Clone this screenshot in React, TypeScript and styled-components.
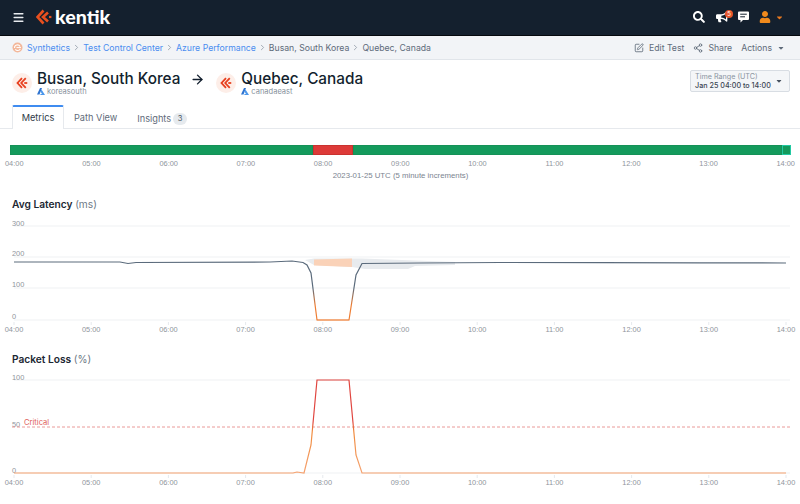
import React from "react";
import styled, { createGlobalStyle } from "styled-components";
import { FaSearch, FaBullhorn, FaUser, FaCaretDown } from "react-icons/fa";
import { SquarePen, Share2, ChevronRight, ArrowRight, Menu } from "lucide-react";

const Global = createGlobalStyle`
  html, body { margin: 0; padding: 0; background: #fff; }
  body { font-family: Inter, "Liberation Sans", sans-serif; color: #1c2733; width: 800px; height: 504px; overflow: hidden; }
  * { box-sizing: border-box; }
`;

const TopBar = styled.header`
  height: 36px; background: #14202e; border-bottom: 1px solid #05090e;
  display: flex; align-items: center; padding: 0 16px 1px 12px; color: #fff;
`;
const Logo = styled.div`display: flex; align-items: center; margin-left: 11px; gap: 3px; flex: 1;`;
const LogoText = styled.span`font-family: Lato, sans-serif; font-weight: 900; font-size: 19.6px; line-height: 24px; color: #fff;`;
const NavIcons = styled.div`display: flex; align-items: center;`;
const NavIcon = styled.span<{ $w: number }>`position: relative; display: flex; align-items: center; justify-content: flex-start; width: ${p => p.$w}px; color: #fff;`;
const Badge = styled.span`
  position: absolute; top: -1px; left: 9px; width: 8px; height: 8px; border-radius: 50%;
  background: #e8562a; color: #fff; font-size: 6px; line-height: 8px; text-align: center;
`;
const UserCaret = styled.span`display: flex; color: #e8791f; margin-left: 0;`;

const Crumbs = styled.nav`
  height: 24px; background: #f2f4f7; border-bottom: 1px solid #e1e5ea;
  display: flex; align-items: center; padding: 0 15px 0 12px; font-size: 8.7px; color: #5f6b7a;
`;
const CrumbTrail = styled.div`display: flex; align-items: center; flex: 1;`;
const CrumbLink = styled.a`color: #4a8df0;`;
const CrumbText = styled.span`color: #5f6b7a;`;
const CrumbSep = styled.span`display: flex; color: #8a94a0; margin: 0 2px 0 2px;`;
const SynthIcon = styled.span`display: flex; margin-right: 4px;`;
const CrumbAction = styled.span`display: flex; align-items: center; gap: 5px; margin-left: 9px; color: #5f6b7a; font-size: 8.7px;`;

const Header = styled.section`display: flex; justify-content: space-between; padding: 10px 10px 0 12px; height: 45px;`;
const Route = styled.div`display: flex; align-items: flex-start;`;
const Endpoint = styled.div`display: flex; align-items: flex-start; gap: 5px;`;
const Avatar = styled.span`
  width: 20px; height: 20px; border-radius: 50%; background: #fdeee8; margin-top: 3px;
  display: flex; align-items: center; justify-content: center;
`;
const EndpointText = styled.div`display: flex; flex-direction: column;`;
const EndpointName = styled.div`font-size: 15.3px; font-weight: 500; line-height: 17px; color: #131f2e;`;
const Region = styled.div`display: flex; align-items: center; gap: 2px; font-size: 7.5px; line-height: 9px; color: #87919c;`;
const RouteArrow = styled.span`display: flex; color: #131f2e; margin: 2px 11px 0 10px;`;
const RangeBox = styled.div`
  width: 100px; height: 22px; background: #f4f6f8; border: 1px solid #d8dde3; border-radius: 2px;
  padding: 1px 5px 0 4px; position: relative;
`;
const RangeLabel = styled.div`font-size: 7.2px; line-height: 9px; color: #8a94a0;`;
const RangeValue = styled.div`font-size: 7.2px; line-height: 10px; color: #3a4552; font-weight: 500; white-space: nowrap;`;
const RangeCaret = styled.span`position: absolute; right: 6px; top: 6px; display: flex; color: #47525f;`;

const Tabs = styled.div`display: flex; height: 24px; padding-left: 12px; border-bottom: 1px solid #e6e9ed; align-items: stretch;`;
const Tab = styled.div<{ $active?: boolean; $drop?: number }>`
  display: flex; align-items: center; gap: 2px; font-size: 9.2px; padding: ${p => p.$drop ?? 2}px 10px 0;
  color: ${p => (p.$active ? "#303b48" : "#5f6b7a")};
  ${p => p.$active ? "background:#fff;border:1px solid #e6e9ed;border-top:2px solid #3f8cf0;border-bottom:0;height:24px;width:52px;justify-content:center;padding:0 0 2px;border-radius:2px 2px 0 0;" : ""}
`;
const Count = styled.span`
  min-width: 14px; height: 12px; border-radius: 6px; background: #e6eaee; font-size: 7.6px; line-height: 12px; text-align: center; color: #4f5a66;
`;

const Status = styled.section`padding: 16px 9px 0 10px;`;
const StatusBar = styled.div`display: flex; height: 10px; background: #149a5c;`;
const Segment = styled.div<{ $grow: number; $kind: "ok" | "bad" | "edge" }>`
  flex: ${p => p.$grow} 0 0;
  background: ${p => (p.$kind === "bad" ? "#dd3a38" : "#149a5c")};
  border: 1px solid ${p => (p.$kind === "bad" ? "#c9322f" : p.$kind === "edge" ? "#22c9a2" : "#159157")};
`;
const TimeAxis = styled.div`
  display: flex; justify-content: space-between; margin: 5px -4px 0 -5px; font-family: "Liberation Sans", sans-serif;
  font-size: 7.4px; line-height: 8px; color: #8f959c;
`;
const Caption = styled.div`text-align: center; font-family: "Liberation Sans", sans-serif; font-size: 7.8px; line-height: 9px; color: #7b8490; margin-top: 3px;`;

const ChartBlock = styled.section<{ $top: number }>`margin-top: ${p => p.$top}px;`;
const ChartTitle = styled.h3`margin: 0; padding-left: 12px; font-size: 10.2px; line-height: 13px; font-weight: 600; color: #1c2733;`;
const Unit = styled.span`font-weight: 400; color: #6e7986;`;
const ChartSvg = styled.svg`display: block; width: 800px; margin-top: 4px;`;
const AxisText = styled.text`font-family: "Liberation Sans", sans-serif; font-size: 7.4px; fill: #8f959c;`;
const CriticalText = styled.text`font-family: Inter, sans-serif; font-size: 7.6px; fill: #e0605c;`;

const hours = ["04:00","05:00","06:00","07:00","08:00","09:00","10:00","11:00","12:00","13:00","14:00"];
const xAt = (i: number) => 14 + i * 77.2;

const KentikMark = ({ size = 16 }: { size?: number }) => (
  <svg width={size} height={size} viewBox="0 0 16 16" fill="none" stroke="#e8501f" strokeWidth="2.6">
    <path d="M7.5 1.5 L1.5 8 L7.5 14.5" />
    <path d="M12 3.5 L7 8 L12 12.5" />
    <path d="M13 8 h2.4" strokeWidth="2.2" />
  </svg>
);
const AvatarMark = () => (
  <svg width="12" height="12" viewBox="0 0 16 16" fill="none" stroke="#e8401f" strokeWidth="2.4">
    <path d="M8 1.5 L2 8 L8 14.5" />
    <path d="M13 1.5 L7 8 L13 14.5" />
    <path d="M11 8 h4" />
  </svg>
);
const Azure = () => (
  <svg width="8" height="7" viewBox="0 0 16 14"><path d="M6 0 h4 L5 13 H0 Z" fill="#2f74d0" /><path d="M9 3 L16 14 H5 L10 11 L7 8 Z" fill="#4c98ec" /></svg>
);
const Synth = () => (
  <svg width="11" height="11" viewBox="0 0 11 11">
    <circle cx="5.5" cy="5.5" r="5" fill="#f3b79a" />
    <path d="M2.5 6 a3 3 0 0 1 5.6 -1.6 M3.3 7.4 a3 3 0 0 0 5 -.4" stroke="#fff" strokeWidth="1.1" fill="none" />
    <path d="M4.5 5.6 H9" stroke="#fff" strokeWidth="1" />
  </svg>
);
const ChatBubble = () => (
  <svg width="11" height="12" viewBox="0 0 11 12">
    <path d="M1 0.5 H10 a1 1 0 0 1 1 1 V8 a1 1 0 0 1 -1 1 H5 L2.5 11.5 V9 H1 a1 1 0 0 1 -1 -1 V1.5 a1 1 0 0 1 1 -1 Z" fill="#fff" />
    <path d="M2.2 3.2 H8.8 M2.2 5.8 H7" stroke="#14202e" strokeWidth="1" />
  </svg>
);

const latencyLine = "14,262 120,262 128,263.5 136,262.5 270,262 292,261 303,262.5 307,265 311,273 317,320 349,320 356,275 362,263.5 420,263 500,262.5 600,262.6 700,262.8 786,263";
const lossLine = "14,473 293,473 297,472 304,473 311,445 317,380 349,380 356,455 362,473 786,473";

function Chart(props: { top: number; bottom: number; grid: [number, string, number][]; children: React.ReactNode; labelY: number }) {
  const { top, bottom, grid, children, labelY } = props;
  return (
    <ChartSvg height={bottom - top} viewBox={`0 ${top} 800 ${bottom - top}`}>
      {grid.map(([y, label, ly]) => (
        <g key={label}>
          <line x1="14" x2="790" y1={y} y2={y} stroke="#eff1f3" />
          <AxisText x="12" y={ly}>{label}</AxisText>
        </g>
      ))}
      {hours.map((h, i) => (
        <g key={h}>
          <line x1={xAt(i)} x2={xAt(i)} y1={labelY - 10} y2={labelY - 7} stroke="#e6e9ed" />
          <AxisText x={xAt(i)} y={labelY} textAnchor="middle">{h}</AxisText>
        </g>
      ))}
      {children}
    </ChartSvg>
  );
}

export default function App() {
  return (
    <>
      <Global />
      <TopBar>
        <Menu size={13} strokeWidth={2.6} color="#e8ebef" />
        <Logo>
          <KentikMark />
          <LogoText>kentik</LogoText>
        </Logo>
        <NavIcons>
          <NavIcon $w={23}><FaSearch size={12} /></NavIcon>
          <NavIcon $w={22}><FaBullhorn size={12} /><Badge>5</Badge></NavIcon>
          <NavIcon $w={21}><ChatBubble /></NavIcon>
          <NavIcon $w={16}><FaUser size={12} color="#f08a1c" /></NavIcon>
          <UserCaret><FaCaretDown size={9} /></UserCaret>
        </NavIcons>
      </TopBar>
      <Crumbs>
        <CrumbTrail>
          <SynthIcon><Synth /></SynthIcon>
          <CrumbLink>Synthetics</CrumbLink>
          <CrumbSep><ChevronRight size={9} /></CrumbSep>
          <CrumbLink>Test Control Center</CrumbLink>
          <CrumbSep><ChevronRight size={9} /></CrumbSep>
          <CrumbLink>Azure Performance</CrumbLink>
          <CrumbSep><ChevronRight size={9} /></CrumbSep>
          <CrumbText>Busan, South Korea</CrumbText>
          <CrumbSep><ChevronRight size={9} /></CrumbSep>
          <CrumbText>Quebec, Canada</CrumbText>
        </CrumbTrail>
        <CrumbAction><SquarePen size={10} />Edit Test</CrumbAction>
        <CrumbAction><Share2 size={10} />Share</CrumbAction>
        <CrumbAction>Actions <FaCaretDown size={8} /></CrumbAction>
      </Crumbs>
      <Header>
        <Route>
          <Endpoint>
            <Avatar><AvatarMark /></Avatar>
            <EndpointText>
              <EndpointName>Busan, South Korea</EndpointName>
              <Region><Azure />koreasouth</Region>
            </EndpointText>
          </Endpoint>
          <RouteArrow><ArrowRight size={15} strokeWidth={2.2} /></RouteArrow>
          <Endpoint>
            <Avatar><AvatarMark /></Avatar>
            <EndpointText>
              <EndpointName>Quebec, Canada</EndpointName>
              <Region><Azure />canadaeast</Region>
            </EndpointText>
          </Endpoint>
        </Route>
        <RangeBox>
          <RangeLabel>Time Range (UTC)</RangeLabel>
          <RangeValue>Jan 25 04:00 to 14:00</RangeValue>
          <RangeCaret><FaCaretDown size={8} /></RangeCaret>
        </RangeBox>
      </Header>
      <Tabs>
        <Tab $active>Metrics</Tab>
        <Tab>Path View</Tab>
        <Tab $drop={4}>Insights <Count>3</Count></Tab>
      </Tabs>
      <Status>
        <StatusBar>
          <Segment $grow={304} $kind="ok" />
          <Segment $grow={39} $kind="bad" />
          <Segment $grow={431} $kind="ok" />
          <Segment $grow={7} $kind="edge" />
        </StatusBar>
        <TimeAxis>{hours.map(h => <span key={h}>{h}</span>)}</TimeAxis>
        <Caption>2023-01-25 UTC (5 minute increments)</Caption>
      </Status>
      <ChartBlock $top={18}>
        <ChartTitle>Avg Latency <Unit>(ms)</Unit></ChartTitle>
        <Chart top={215} bottom={340} labelY={332} grid={[[226, "300", 226], [257, "200", 256], [288, "100", 287], [320, "0", 319]]}>
          <defs>
            <linearGradient id="lat" gradientUnits="userSpaceOnUse" x1="0" y1="262" x2="0" y2="320">
              <stop offset="0.45" stopColor="#5b6b7c" />
              <stop offset="0.75" stopColor="#ee7d33" />
            </linearGradient>
          </defs>
          <path d="M305 260 L314 258.5 H352 L362 258.5 L455 262 V265 L415 266 L408 269 L365 269 L352 267 L314 265 Z" fill="#e8ebee" />
          <path d="M314 259.5 L352 258.5 V267 L314 265.5 Z" fill="#fad2b8" />
          <path d="M317 320 H349" stroke="#fad2b8" strokeWidth="1.5" />
          <polyline points={latencyLine} fill="none" stroke="url(#lat)" strokeWidth="1.2" />
        </Chart>
      </ChartBlock>
      <ChartBlock $top={13}>
        <ChartTitle>Packet Loss <Unit>(%)</Unit></ChartTitle>
        <Chart top={370} bottom={490} labelY={485} grid={[[380, "100", 380], [473, "0", 473]]}>
          <defs>
            <linearGradient id="loss" gradientUnits="userSpaceOnUse" x1="0" y1="380" x2="0" y2="473">
              <stop offset="0.45" stopColor="#e0453f" />
              <stop offset="0.55" stopColor="#f08a3c" />
              <stop offset="1" stopColor="#f5a270" />
            </linearGradient>
          </defs>
          <AxisText x="12" y="427">50</AxisText>
          <CriticalText x="24" y="425">Critical</CriticalText>
          <line x1="12" x2="790" y1="427" y2="427" stroke="#ea9a98" strokeDasharray="3 2" />
          <polyline points={lossLine} fill="none" stroke="url(#loss)" strokeWidth="1.2" />
        </Chart>
      </ChartBlock>
    </>
  );
}
